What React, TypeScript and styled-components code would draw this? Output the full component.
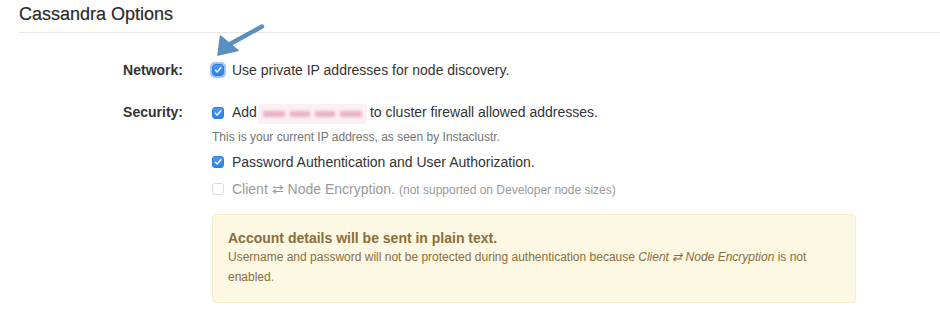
import React from 'react';
import styled, { createGlobalStyle } from 'styled-components';

const GlobalStyle = createGlobalStyle`
  body {
    margin: 0;
    background: #fff;
    font-family: "Liberation Sans", Arial, Helvetica, sans-serif;
    color: #333;
  }
`;

// 페이지 전체
const Page = styled.div`
  position: relative;
  width: 940px;
  height: 325px;
  overflow: hidden;
`;

const Heading = styled.h3`
  margin: 0 0 0 19px;
  padding-top: 4px;
  font-size: 18px;
  line-height: 21px;
  font-weight: normal;
  color: #2a2a2a;
  -webkit-text-stroke: 0.2px #2a2a2a;
`;

const Rule = styled.hr`
  margin: 7px 0 0 19px;
  border: 0;
  border-top: 1px solid #e8e8e8;
`;

// 라벨 / 내용 두 칸
const Form = styled.div`
  display: grid;
  grid-template-columns: 183px 644px;
  column-gap: 29px;
  row-gap: 22px;
  margin-top: 27px;
`;

const Label = styled.div`
  text-align: right;
  font-weight: bold;
  font-size: 14px;
  line-height: 20px;
  color: #333;
`;

const Group = styled.div`
  display: flex;
  flex-direction: column;
`;

const Check = styled.label<{ $disabled?: boolean; $gap?: number }>`
  display: flex;
  align-items: center;
  gap: 8px;
  font-size: 14px;
  line-height: 20px;
  margin-top: ${(p) => p.$gap ?? 0}px;
  color: ${(p) => (p.$disabled ? '#999' : '#333')};
`;

const Box = styled.span<{ $checked?: boolean; $focus?: boolean }>`
  flex: none;
  width: 12px;
  height: 12px;
  margin-top: -1px;
  border-radius: 3px;
  box-sizing: border-box;
  display: flex;
  align-items: center;
  justify-content: center;
  background: ${(p) => (p.$checked ? 'linear-gradient(#4a9bf7, #2f7ff0)' : '#fff')};
  border: 1px solid ${(p) => (p.$checked ? '#2f7ae0' : '#dcdcdc')};
  box-shadow: ${(p) => (p.$focus ? '0 0 0 2px rgba(80, 150, 240, 0.55)' : 'none')};
`;

const Small = styled.span`
  font-size: 12px;
  margin-left: 4px;
`;

const Blurred = styled.span`
  display: inline-flex;
  align-items: center;
  gap: 5px;
  height: 20px;
  padding: 0 5px;
  margin: 0 3px 0 1px;
  border-radius: 4px;
  background: #fbf0f4;
`;

const Smudge = styled.span<{ $w: number }>`
  width: ${(p) => p.$w}px;
  height: 6px;
  background: #e8b2c6;
  filter: blur(1.6px);
`;

const Help = styled.div`
  font-size: 12px;
  line-height: 17px;
  color: #737373;
  margin-top: 5px;
`;

const Alert = styled.div`
  margin-top: 14px;
  padding: 15px;
  border: 1px solid #faebcc;
  border-radius: 4px;
  background: #fcf8e3;
  color: #8a6d3b;
`;

const AlertTitle = styled.div`
  font-weight: bold;
  font-size: 14px;
  line-height: 17px;
`;

const AlertBody = styled.div`
  font-size: 12px;
  line-height: 20px;
`;

const Pointer = styled.svg`
  position: absolute;
  left: 212px;
  top: 22px;
`;

function Tick() {
  return (
    <svg width="8" height="8" viewBox="0 0 8 8">
      <path d="M1.3 4.2 L3.2 6 L6.8 1.8" fill="none" stroke="#fff" strokeWidth="1.4" strokeLinecap="round" strokeLinejoin="round" />
    </svg>
  );
}

function Arrow() {
  return (
    <Pointer width="56" height="38" viewBox="0 0 56 38">
      <path d="M50 4.5 L18 22" stroke="#5b8ec1" strokeWidth="4.5" strokeLinecap="round" />
      <polygon points="6,33 8.5,14 26,28.5" fill="#5b8ec1" stroke="#5b8ec1" strokeWidth="1.5" strokeLinejoin="round" />
    </Pointer>
  );
}

export default function App() {
  return (
    <Page>
      <GlobalStyle />
      <Heading>Cassandra Options</Heading>
      <Rule />
      <Form>
        <Label>Network:</Label>
        <Group>
          <Check>
            <Box $checked $focus><Tick /></Box>
            Use private IP addresses for node discovery.
          </Check>
        </Group>

        <Label>Security:</Label>
        <Group>
          <Check>
            <Box $checked><Tick /></Box>
            <span>
              Add
              <Blurred>
                <Smudge $w={22} />
                <Smudge $w={20} />
                <Smudge $w={20} />
                <Smudge $w={22} />
              </Blurred>
              to cluster firewall allowed addresses.
            </span>
          </Check>
          <Help>This is your current IP address, as seen by Instaclustr.</Help>
          <Check $gap={6}>
            <Box $checked><Tick /></Box>
            Password Authentication and User Authorization.
          </Check>
          <Check $gap={7} $disabled>
            <Box />
            <span>
              Client ⇄ Node Encryption.<Small>(not supported on Developer node sizes)</Small>
            </span>
          </Check>
          <Alert>
            <AlertTitle>Account details will be sent in plain text.</AlertTitle>
            <AlertBody>
              Username and password will not be protected during authentication because{' '}
              <i>Client ⇄ Node Encryption</i> is not enabled.
            </AlertBody>
          </Alert>
        </Group>
      </Form>
      <Arrow />
    </Page>
  );
}
